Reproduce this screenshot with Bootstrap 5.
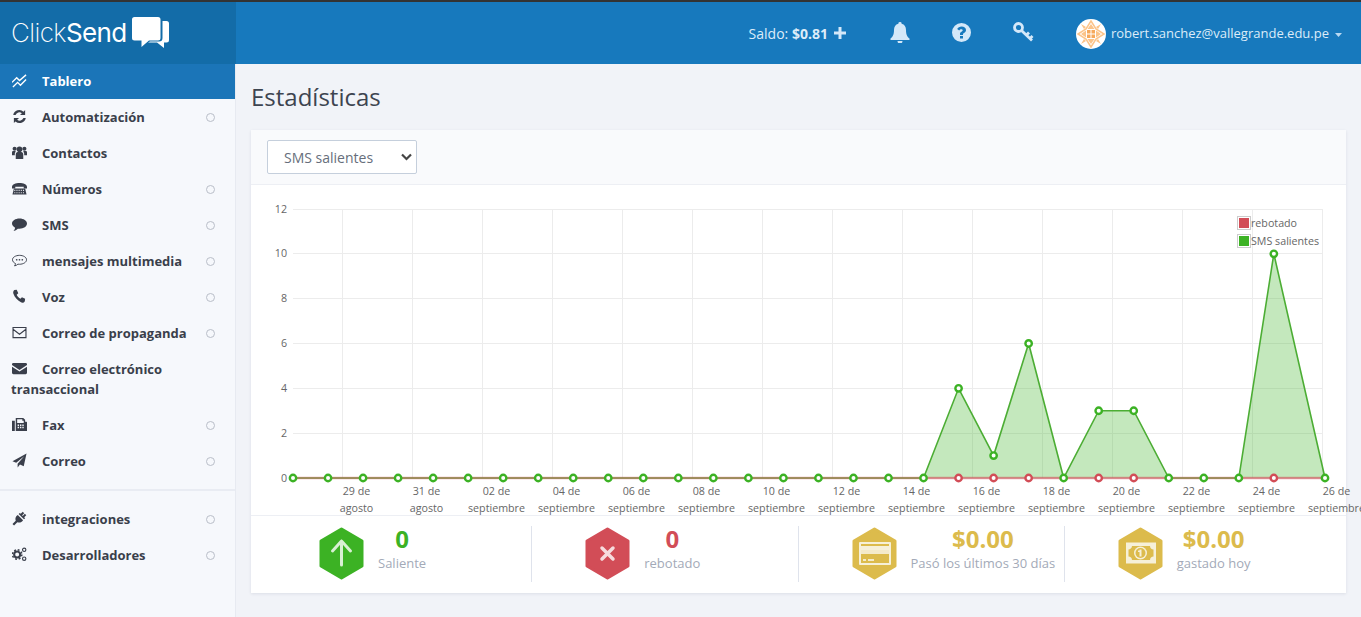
<!DOCTYPE html>
<html lang="es">
<head>
    <meta charset="UTF-8">
    <meta name="viewport" content="width=device-width, initial-scale=1.0">
    <title>ClickSend - Tablero</title>
    <link href="https://cdn.jsdelivr.net/npm/bootstrap@5.3.0/dist/css/bootstrap.min.css" rel="stylesheet">
    <style>
        html, body { height: 100%; }
        body { font-family: "Open Sans", "Liberation Sans", sans-serif; background: #f1f3f8; overflow: hidden; color: #3d4450; }
        .top-line { height: 2px; background: #333; }
        .top-bar { height: 62px; background: #1779bd; color: #dcecf9; }
        .logo-box { width: 236px; background: #136ca8; padding-left: 11px; color: #fff; }
        .logo-text { font-family: Inter, "Open Sans", sans-serif; font-size: 26px; letter-spacing: -.6px; line-height: 1; width: 121px; white-space: nowrap; }
        .logo-thin { font-weight: 200; }
        .logo-bold { font-weight: 400; }
        .logo-bubble { width: 37px; height: 31px; margin-top: -1px; }
        .saldo { font-size: 14px; margin-top: 1px; }
        .top-ico { fill: #d4e8f9; margin-top: -2px; }
        .plus-ico { width: 12px; height: 12px; margin-left: 6px; margin-top: 0; }
        .bell-ico { width: 20px; height: 21px; margin-left: 44px; }
        .help-ico { width: 19px; height: 19px; margin-left: 42px; }
        .key-ico { width: 21px; height: 20px; margin-left: 42px; fill: none; stroke: #d4e8f9; }
        .avatar-ico { width: 30px; height: 30px; margin-left: 42px; margin-top: 1px; }
        .user-mail { font-size: 13px; margin-left: 5px; margin-top: 1px; }
        .caret-ico { width: 7px; height: 4px; margin-left: 6px; margin-right: 19px; margin-top: 4px; fill: #b9d9f2; }
        .page-body { height: 555px; }
        .side-col { width: 236px; background: #f6f8fc; border-right: 1px solid #e7eaf1; flex-shrink: 0; }
        .side-link { padding: 8px 12px 8px 11px; font-size: 13px; font-weight: 700; line-height: 20px; color: #3a3f4b; }
        .side-link:hover { color: #3a3f4b; }
        .side-link.on { background: #1b75b8; color: #fff; height: 35px; padding-top: 7px; }
        .side-ico { width: 15px; height: 15px; margin: 0 15px 0 1px; vertical-align: -2px; fill: #3a3f4b; }
        .on .side-ico { fill: #fff; }
        .side-dot { float: right; width: 9px; height: 9px; margin: 6px 8px 0 0; border: 1px solid #b9bec8; border-radius: 50%; }
        .side-sep { height: 2px; background: #e9ecf3; margin: 10px 0 10px; }
        .main-col { padding: 0 15px; min-width: 0; }
        .page-title { font-size: 24px; line-height: 33px; font-weight: 400; margin: 16px 0 17px; color: #3d4450; }
        .stat-card { height: 463px; border: 0; border-radius: 0; box-shadow: 0 1px 3px rgba(40, 50, 80, .1); }
        .stat-head { height: 55px; padding: 10px 16px; background: #f9fafc; border-bottom: 1px solid #edeff4; }
        .sms-select { width: 150px; height: 34px; padding: 0 0 0 16px; font-size: 14px; color: #666e7b; border-color: #c5cfdc; border-radius: 2px; background-size: 11px 8px; background-position: right 4px center; background-image: url("data:image/svg+xml,%3csvg xmlns='http://www.w3.org/2000/svg' viewBox='0 0 11 8'%3e%3cpath fill='none' stroke='%23444' stroke-width='2.2' d='M1 1.500 5.500 6 10 1.500'/%3e%3c/svg%3e"); }
        .chart-svg { display: block; width: 1095px; height: 330px; overflow: visible; }
        .chart-svg text { font-family: "Open Sans", "Liberation Sans", sans-serif; font-size: 10.7px; fill: #666; }
        .stat-row { height: 78px; margin: 0 15px; }
        .stat-wrap { border-top: 1px solid #edeff4; }
        .stat-cell { width: 25%; padding-left: 53px; height: 100%; gap: 14px; }
        .stat-cell .cell-line { position: absolute; right: 0; top: 10px; bottom: 12px; border-right: 1px solid #dfe3ec; }
        .hex-ico { width: 45px; height: 53px; flex-shrink: 0; margin-top: -4px; }
        .stat-text { margin-top: -14px; }
        .stat-num { font-size: 24px; font-weight: 700; line-height: 30px; }
        .stat-label { font-size: 13px; line-height: 19px; color: #a3aab8; white-space: nowrap; }
        .c-green { color: #3cb224; }
        .c-red { color: #d24d57; }
        .c-gold { color: #dcbb4c; }
    </style>
</head>
<body>
    <div class="top-line"></div>
    <nav class="top-bar d-flex align-items-stretch">
        <div class="logo-box d-flex align-items-center">
            <span class="logo-text"><span class="logo-thin">Click</span><span class="logo-bold">Send</span></span>
            <svg class="logo-bubble" viewBox="0 0 37 31">
                <path fill="#fff" d="M2.500 0H26a2.500 2.500 0 0 1 2.500 2.500V21a2.500 2.500 0 0 1-2.500 2.500H17L9.500 30V23.500H2.500A2.500 2.500 0 0 1 0 21V2.500A2.500 2.500 0 0 1 2.500 0Z"/>
                <path fill="#fff" d="M30.500 4h4A2.500 2.500 0 0 1 37 6.500V23a2.500 2.500 0 0 1-2.500 2.500H32V31L25 25.500H16L18 24.500H27A3.500 3.500 0 0 0 30.500 21Z"/>
            </svg>
        </div>
        <div class="ms-auto d-flex align-items-center">
            <span class="saldo">Saldo: <b>$0.81</b></span>
            <svg class="plus-ico top-ico" viewBox="0 0 12 12"><path d="M4.500 0h3v4.500H12v3H7.500V12h-3V7.500H0v-3h4.500Z"/></svg>
            <svg class="bell-ico top-ico" viewBox="0 0 20 21"><path d="M10 0a1.600 1.600 0 0 1 1.600 1.800C14.600 2.500 16 5 16 8c0 5 1.500 7 3.500 8.500V18H.5v-1.500C2.500 15 4 13 4 8c0-3 1.400-5.500 4.400-6.200A1.600 1.600 0 0 1 10 0ZM7.500 19h5a2.500 2.500 0 0 1-5 0Z"/></svg>
            <svg class="help-ico top-ico" viewBox="0 0 19 19"><path fill-rule="evenodd" d="M9.500 0a9.500 9.500 0 1 1 0 19a9.500 9.500 0 0 1 0-19ZM8 13v2.500h3V13ZM9.700 3.500C7.500 3.500 6 4.500 5.200 6l2 1.500c.5-.8 1.100-1.300 2-1.300c.9 0 1.500.5 1.500 1.100c0 .7-.5 1-1.300 1.500C8.300 9.400 8 10.200 8 11v1h3v-.7c0-.5.300-.8 1-1.200c1.200-.7 2-1.500 2-3C14 4.800 12 3.500 9.700 3.500Z"/></svg>
            <svg class="key-ico top-ico" viewBox="0 0 21 20"><circle cx="5.500" cy="5.500" r="4" stroke-width="2.800"/><path stroke-width="2.800" d="M8.500 8.500 19 18.500M13.500 13 16 10.500M17 16.500 19.500 14"/></svg>
            <svg class="avatar-ico" viewBox="0 0 30 30">
                <circle cx="15" cy="15" r="15" fill="#fff"/>
                <path fill="none" stroke="#fbc48a" stroke-width="1.500" d="M15 2 20 10 28 15 20 20 15 28 10 20 2 15 10 10Z"/>
                <path fill="#fbc48a" d="M15 5 18.500 10H11.500ZM25 15 20 18.500V11.500ZM15 25 11.500 20H18.500ZM5 15 10 11.500V18.500ZM5 5 10 8 8 10ZM25 5 20 8 22 10ZM5 25 10 22 8 20ZM25 25 20 22 22 20Z"/>
                <path fill="#f6a95c" d="M11 11h3.500v3.500H11ZM15.500 11H19v3.500h-3.500ZM11 15.500h3.500V19H11ZM15.500 15.500H19V19h-3.500Z"/>
            </svg>
            <span class="user-mail">robert.sanchez@vallegrande.edu.pe</span>
            <svg class="caret-ico" viewBox="0 0 7 4"><path d="M0 0h7L3.500 4Z"/></svg>
        </div>
    </nav>

    <div class="page-body d-flex">
        <aside class="side-col">
            <nav class="nav flex-column d-block">
                <a class="nav-link side-link on" href="#"><svg class="side-ico" viewBox="0 0 16 16"><path fill="none" stroke="#fff" stroke-width="1.500" d="M0 10 5 5l3 3 7-6M1 15l5-5 3 3 6-6"/></svg>Tablero</a>
                <a class="nav-link side-link" href="#"><span class="side-dot"></span><svg class="side-ico" viewBox="0 0 16 16"><path d="M14 1v5.500H8.500l2-2A4.300 4.300 0 0 0 3.800 6.300H1.300A6.600 6.600 0 0 1 12.300 2.800ZM2 15V9.500h5.500l-2 2a4.300 4.300 0 0 0 6.700-1.800h2.500A6.600 6.600 0 0 1 3.700 13.200Z"/></svg>Automatización</a>
                <a class="nav-link side-link" href="#"><svg class="side-ico" viewBox="0 0 16 16"><circle cx="8" cy="4.500" r="3"/><circle cx="2.800" cy="4" r="2.200"/><circle cx="13.200" cy="4" r="2.200"/><path d="M4 15V10c0-1.500 1-2.500 2-2.500h4c1 0 2 1 2 2.500v5ZM0 11V8c0-1 .7-1.500 1.500-1.500H4L3 9v2ZM16 11V8C16 7 15.300 6.500 14.500 6.500H12l1 2.500v2Z"/></svg>Contactos</a>
                <a class="nav-link side-link" href="#"><span class="side-dot"></span><svg class="side-ico" viewBox="0 0 16 16"><path d="M0 6.500C0 3 4 2 8 2s8 1 8 4.500V8h-3.500V6h-9v2H0Z"/><path d="M2 8h12l1.500 6.500H.5Z"/><path stroke="#f6f8fc" stroke-width="1.100" stroke-dasharray="1 1.300" fill="none" d="M2.500 10h11M2.500 12.500h11"/></svg>Números</a>
                <a class="nav-link side-link" href="#"><span class="side-dot"></span><svg class="side-ico" viewBox="0 0 16 16"><path d="M8 1.500c4.400 0 8 2.400 8 5.500s-3.600 5.500-8 5.500c-.6 0-1.200 0-1.800-.1C5 13.800 3.300 14.500 1.500 14.700c1-1 1.700-2 1.800-3.300C1.300 10.400 0 8.800 0 7c0-3.100 3.600-5.500 8-5.500Z"/></svg>SMS</a>
                <a class="nav-link side-link" href="#"><span class="side-dot"></span><svg class="side-ico" viewBox="0 0 16 16"><path fill="none" stroke="#3a3f4b" stroke-width="1" d="M8 2.500c4 0 7.500 2 7.500 4.700S12 12 8 12c-.6 0-1.200 0-1.700-.1C5.300 13 4 13.500 2.700 13.700c.7-.8 1-1.500 1-2.500C1.700 10.300.5 8.800.5 7.200C.5 4.500 4 2.500 8 2.500Z"/><circle cx="5" cy="7.200" r=".9"/><circle cx="8" cy="7.200" r=".9"/><circle cx="11" cy="7.200" r=".9"/></svg>mensajes multimedia</a>
                <a class="nav-link side-link" href="#"><span class="side-dot"></span><svg class="side-ico" viewBox="0 0 16 16"><path d="M2.500 1 5 .8 6.700 4.500 5 6.200c.7 1.600 2.300 3.300 4 4.200l1.600-1.600 3.400 1.600-.3 2.300c-.3 1.600-2 2.300-3.700 1.800C5.800 12 3 9 1.500 5 1 3.500 1.300 1.800 2.500 1Z"/></svg>Voz</a>
                <a class="nav-link side-link" href="#"><span class="side-dot"></span><svg class="side-ico" viewBox="0 0 16 16"><path fill="none" stroke="#3a3f4b" stroke-width="1.200" d="M1.100 2.600h13.800v10.800H1.100ZM1.100 4.500 8 9.800l6.900-5.300"/></svg>Correo de propaganda</a>
                <a class="nav-link side-link" href="#"><svg class="side-ico" viewBox="0 0 16 16"><path d="M1.500 2h13A1.500 1.500 0 0 1 16 3.500v.7L8 9.500 0 4.200v-.7A1.500 1.500 0 0 1 1.500 2ZM0 6v6.500A1.500 1.500 0 0 0 1.500 14h13a1.500 1.500 0 0 0 1.500-1.500V6L8 11.300Z"/></svg>Correo electrónico transaccional</a>
                <a class="nav-link side-link" href="#"><span class="side-dot"></span><svg class="side-ico" viewBox="0 0 16 16"><path d="M0 4h3v11H0ZM4 1h8l2 2v2h1.500a.5.500 0 0 1 .5.500V15H4ZM5.500 2.500V6.500h7V4H11V2.500Z"/><path fill="#f6f8fc" d="M6 8h1.500v1.500H6ZM8.500 8H10v1.500H8.500ZM11 8h1.500v1.500H11ZM6 10.500h1.500V12H6ZM8.500 10.500H10V12H8.500ZM11 10.500h1.500V12H11Z"/></svg>Fax</a>
                <a class="nav-link side-link" href="#"><span class="side-dot"></span><svg class="side-ico" viewBox="0 0 16 16"><path d="M15.500.5 12.500 14 8.500 12.300 6 15.500V11.500L13 3.500 4.500 10.500.5 8.800Z"/></svg>Correo</a>
                <div class="side-sep"></div>
                <a class="nav-link side-link" href="#"><span class="side-dot"></span><svg class="side-ico" viewBox="0 0 16 16"><path d="M11.500.8 13 2.300 10.800 4.500 11.500 5.200 13.700 3 15.200 4.500 13 6.700 14 7.700 12.800 8.900 7.100 3.200 8.300 2 9.300 3ZM6.200 4.200 11.800 9.800C10.500 12 8 13 5.700 12L2.200 15.500.5 13.800 4 10.300C3 8 4 5.500 6.200 4.200Z"/></svg>integraciones</a>
                <a class="nav-link side-link" href="#"><span class="side-dot"></span><svg class="side-ico" viewBox="0 0 16 16"><circle cx="5.500" cy="8" r="3.200" fill="none" stroke="#3a3f4b" stroke-width="2.200"/><circle cx="5.500" cy="8" r="5" fill="none" stroke="#3a3f4b" stroke-width="1.600" stroke-dasharray="2 1.930"/><circle cx="13" cy="3" r="1.800" fill="none" stroke="#3a3f4b" stroke-width="1.200"/><circle cx="13" cy="12.500" r="1.800" fill="none" stroke="#3a3f4b" stroke-width="1.200"/></svg>Desarrolladores</a>
            </nav>
        </aside>

        <main class="main-col flex-grow-1">
            <h1 class="page-title">Estadísticas</h1>
            <div class="card stat-card">
                <div class="stat-head">
                    <select class="form-select sms-select">
                        <option>SMS salientes</option>
                    </select>
                </div>
                <svg class="chart-svg" id="chart" viewBox="251 185 1095 330"></svg>
                <div class="stat-wrap">
                    <div class="stat-row d-flex">
                        <div class="stat-cell d-flex align-items-center position-relative">
                            <svg class="hex-ico" viewBox="0 0 45 53"><path fill="#3cb224" stroke="#3cb224" stroke-width="3" stroke-linejoin="round" d="M22.500 2 43 14V39L22.500 51 2 39V14Z"/><path fill="none" stroke="#fff" stroke-opacity=".8" stroke-width="3" stroke-linecap="round" stroke-linejoin="round" d="M22.500 38V14M13.500 24 22.500 14 31.500 24"/></svg>
                            <div class="text-center stat-text"><div class="stat-num c-green">0</div><div class="stat-label">Saliente</div></div>
                            <span class="cell-line"></span>
                        </div>
                        <div class="stat-cell d-flex align-items-center position-relative">
                            <svg class="hex-ico" viewBox="0 0 45 53"><path fill="#d24d57" stroke="#d24d57" stroke-width="3" stroke-linejoin="round" d="M22.500 2 43 14V39L22.500 51 2 39V14Z"/><path fill="none" stroke="#fff" stroke-opacity=".8" stroke-width="3.500" stroke-linecap="round" d="M17 21 28 32M28 21 17 32"/></svg>
                            <div class="text-center stat-text"><div class="stat-num c-red">0</div><div class="stat-label">rebotado</div></div>
                            <span class="cell-line"></span>
                        </div>
                        <div class="stat-cell d-flex align-items-center position-relative">
                            <svg class="hex-ico" viewBox="0 0 45 53"><path fill="#dcbb4c" stroke="#dcbb4c" stroke-width="3" stroke-linejoin="round" d="M22.500 2 43 14V39L22.500 51 2 39V14Z"/><path fill="#f6f0d8" fill-rule="evenodd" d="M8 15H38a1 1 0 0 1 1 1V37a1 1 0 0 1-1 1H8a1 1 0 0 1-1-1V16a1 1 0 0 1 1-1ZM9 17V19H37V17ZM9 23V36H37V23Z"/><path fill="#f6f0d8" d="M9 23H37V27H9ZM11 32H14V34H11ZM16 32H22V34H16Z" opacity=".9"/></svg>
                            <div class="text-center stat-text"><div class="stat-num c-gold">$0.00</div><div class="stat-label">Pasó los últimos 30 días</div></div>
                            <span class="cell-line"></span>
                        </div>
                        <div class="stat-cell d-flex align-items-center">
                            <svg class="hex-ico" viewBox="0 0 45 53"><path fill="#dcbb4c" stroke="#dcbb4c" stroke-width="3" stroke-linejoin="round" d="M22.500 2 43 14V39L22.500 51 2 39V14Z"/><path fill="#f6f0d8" fill-rule="evenodd" d="M8 15.500H38V36.500H8ZM14 19C14 21 12 22.500 10.500 22.500V29.500C12.500 29.500 14 31 14 33H32C32 31 33.500 29.500 35.500 29.500V22.500C33.500 22.500 32 21 32 19Z"/><circle cx="22.500" cy="26" r="6.500" fill="#f6f0d8"/><circle cx="22.500" cy="26" r="5" fill="#dcbb4c"/><path fill="#f6f0d8" d="M21.500 22.500H23.500V29.500H21.500ZM20 23.500H22V25H20Z"/></svg>
                            <div class="text-center stat-text"><div class="stat-num c-gold">$0.00</div><div class="stat-label">gastado hoy</div></div>
                        </div>
                    </div>
                </div>
            </div>
        </main>
    </div>

    <script>
        // chart drawn in page coordinates (see the viewBox)
        const x0 = 293, step = 35.03, y0 = 478, perUnit = 22.42;
        const green = { 19: 4, 20: 1, 21: 6, 23: 3, 24: 3, 28: 10 };
        const points = [];
        for (let i = 0; i <= 28; i++) points.push([x0 + i * step, y0 - (green[i] || 0) * perUnit]);
        points.push([1325, y0]);

        let svg = '';
        [478.5, 433.5, 388.5, 343.5, 298.5, 253.5, 209.5].forEach((y, i) => {
            svg += `<line x1="293" x2="1323" y1="${y}" y2="${y}" stroke="#ececec"/>`;
            svg += `<text x="287" y="${y + 3.2}" text-anchor="end">${i * 2}</text>`;
        });
        const dates = ['29 de|agosto', '31 de|agosto'];
        for (let d = 2; d <= 26; d += 2) dates.push(String(d).padStart(2, '0') + ' de|septiembre');
        dates.forEach((label, k) => {
            const gx = Math.floor(342 + k * 70.07) + .5;
            const parts = label.split('|');
            svg += `<line x1="${gx}" x2="${gx}" y1="209" y2="478" stroke="#ececec"/>`;
            svg += `<text x="${gx + 14}" y="495" text-anchor="middle">${parts[0]}</text>`;
            svg += `<text x="${gx + 14}" y="512" text-anchor="middle">${parts[1]}</text>`;
        });

        const line = points.map(p => p[0] + ',' + p[1]).join(' ');
        svg += `<polygon points="293,${y0} ${line}" fill="#3cb224" fill-opacity=".3"/>`;
        svg += `<polyline points="${line}" fill="none" stroke="#4cad34" stroke-width="1.600"/>`;
        svg += `<line x1="293" x2="1325" y1="${y0}" y2="${y0}" stroke="#d24d57" stroke-width="2.600" stroke-opacity=".45"/>`;
        // stretches where only the red series lies on the axis
        [[923.5, 1064], [1064, 1169], [1239, 1325]].forEach(s => {
            svg += `<line x1="${s[0]}" x2="${s[1]}" y1="${y0}" y2="${y0}" stroke="#d24d57" stroke-width="2" stroke-opacity=".3"/>`;
        });
        points.forEach(p => {
            if (p[1] !== y0) svg += `<circle cx="${p[0]}" cy="${y0}" r="3.200" fill="#fff" stroke="#d24d57" stroke-width="2.400"/>`;
            svg += `<circle cx="${p[0]}" cy="${p[1]}" r="3.200" fill="#fff" stroke="#3cb224" stroke-width="2.400"/>`;
        });

        svg += `<rect x="1237.500" y="216.500" width="13" height="13" fill="#fff" stroke="#ccc"/><rect x="1239" y="218" width="10" height="10" fill="#d24d57"/>`;
        svg += `<text x="1251" y="227">rebotado</text>`;
        svg += `<rect x="1237.500" y="234.500" width="13" height="13" fill="#fff" stroke="#ccc"/><rect x="1239" y="236" width="10" height="10" fill="#3cb224"/>`;
        svg += `<text x="1251" y="245">SMS salientes</text>`;
        document.getElementById('chart').innerHTML = svg;
    </script>
    <script src="https://cdn.jsdelivr.net/npm/bootstrap@5.3.0/dist/js/bootstrap.bundle.min.js"></script>
</body>
</html>
